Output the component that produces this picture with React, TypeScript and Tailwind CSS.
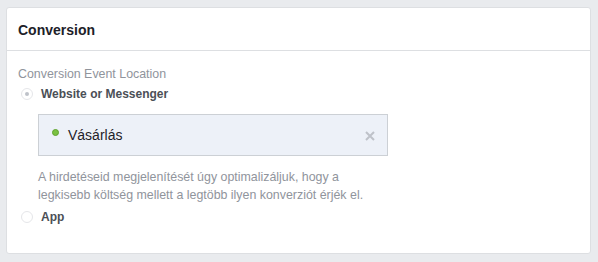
import React from "react";

export default function App() {
  return (
    <div className="w-[598px] h-[262px] bg-[#e9ebee] pt-[7px] pl-[6px] pr-[7px]" style={{ fontFamily: '"Liberation Sans", Arial, sans-serif' }}>
      <div className="bg-white border border-[#dddfe2] rounded-[3px] h-[247px] box-border">
        <div className="h-[43px] border-b border-[#dddfe2] flex items-center pl-[11px]">
          <span className="text-[14px] font-bold text-[#1d2129] leading-none pt-[2px]">Conversion</span>
        </div>
        <div className="pl-[11px] pt-[15px]">
          <div className="text-[12.4px] text-[#90949c] leading-[16px]">Conversion Event Location</div>
          <div className="flex items-center mt-[3px] h-[18px]">
            <span className="w-[12px] h-[12px] rounded-full border border-[#e5e6e9] bg-white flex items-center justify-center ml-[3px]">
              <span className="w-[4px] h-[4px] rounded-full bg-[#bec2c9]"></span>
            </span>
            <span className="ml-[8px] text-[12px] font-bold text-[#4b4f56]">Website or Messenger</span>
          </div>
          <div className="ml-[20px] mt-[11px] w-[350px] h-[42px] bg-[#edf1f8] border border-[#ccd0d5] flex items-center">
            <span className="ml-[13px] w-[7px] h-[7px] rounded-full bg-[#7ac142] border border-[#5fa32e] -mt-[5px]"></span>
            <span className="ml-[9px] text-[14px] text-[#1d2129] mt-[1px]">Vásárlás</span>
            <span className="ml-auto mr-[12px] mt-[1px]">
              <svg width="10" height="10" viewBox="0 0 10 10">
                <path d="M1 1L9 9M9 1L1 9" stroke="#bec2c9" strokeWidth="2" />
              </svg>
            </span>
          </div>
          <div className="ml-[20px] mt-[12px] text-[12.4px] text-[#90949c] leading-[18px]">
            A hirdetéseid megjelenítését úgy optimalizáljuk, hogy a<br />
            legkisebb költség mellett a legtöbb ilyen konverziót érjék el.
          </div>
          <div className="flex items-center mt-[4px] h-[18px]">
            <span className="w-[12px] h-[12px] rounded-full border border-[#e5e6e9] bg-white ml-[3px]"></span>
            <span className="ml-[8px] text-[12px] font-bold text-[#4b4f56]">App</span>
          </div>
        </div>
      </div>
    </div>
  );
}
